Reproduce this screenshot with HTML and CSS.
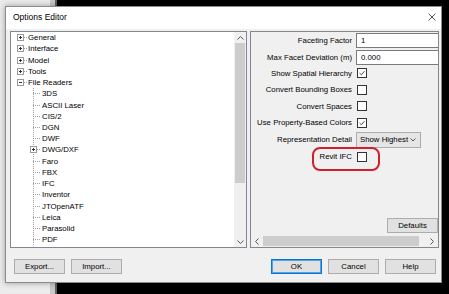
FILE: index.html
```html
<!DOCTYPE html>
<html lang="en">

<head>
  <meta charset="UTF-8">
  <meta name="viewport" content="width=device-width, initial-scale=1.0">
  <title>Options Editor</title>
  <link rel="stylesheet" href="styles.css">
</head>

<body>
  <div class="dialog">
    <header class="titlebar">
      <h1>Options Editor</h1>
      <svg class="close" width="8" height="8" viewBox="0 0 8 8">
        <path d="M0.5 0.5L7.5 7.5M7.5 0.5L0.5 7.5" stroke="#444" stroke-width="0.9" fill="none" />
      </svg>
    </header>

    <div class="split">
      <!-- left: option tree -->
      <div class="tree">
        <ul class="nodes">
          <li><div class="row"><svg class="exp" viewBox="0 0 7 7"><rect x="0.5" y="0.5" width="6" height="6" fill="#fff" stroke="#9a9a9a" /><path d="M2 3.5H5M3.5 2V5" stroke="#333" stroke-width="1" /></svg><i class="dash"></i>General</div></li>
          <li><div class="row"><svg class="exp" viewBox="0 0 7 7"><rect x="0.5" y="0.5" width="6" height="6" fill="#fff" stroke="#9a9a9a" /><path d="M2 3.5H5M3.5 2V5" stroke="#333" stroke-width="1" /></svg><i class="dash"></i>Interface</div></li>
          <li><div class="row"><svg class="exp" viewBox="0 0 7 7"><rect x="0.5" y="0.5" width="6" height="6" fill="#fff" stroke="#9a9a9a" /><path d="M2 3.5H5M3.5 2V5" stroke="#333" stroke-width="1" /></svg><i class="dash"></i>Model</div></li>
          <li><div class="row"><svg class="exp" viewBox="0 0 7 7"><rect x="0.5" y="0.5" width="6" height="6" fill="#fff" stroke="#9a9a9a" /><path d="M2 3.5H5M3.5 2V5" stroke="#333" stroke-width="1" /></svg><i class="dash"></i>Tools</div></li>
          <li>
            <div class="row"><svg class="exp" viewBox="0 0 7 7"><rect x="0.5" y="0.5" width="6" height="6" fill="#fff" stroke="#9a9a9a" /><path d="M2 3.5H5" stroke="#333" stroke-width="1" /></svg><i class="dash"></i>File Readers</div>
            <ul class="kids">
              <li class="row"><i class="stem"></i>3DS</li>
              <li class="row"><i class="stem"></i>ASCII Laser</li>
              <li class="row"><i class="stem"></i>CIS/2</li>
              <li class="row"><i class="stem"></i>DGN</li>
              <li class="row"><i class="stem"></i>DWF</li>
              <li class="row sub"><svg class="exp" viewBox="0 0 7 7"><rect x="0.5" y="0.5" width="6" height="6" fill="#fff" stroke="#9a9a9a" /><path d="M2 3.5H5M3.5 2V5" stroke="#333" stroke-width="1" /></svg><i class="dash"></i>DWG/DXF</li>
              <li class="row"><i class="stem"></i>Faro</li>
              <li class="row"><i class="stem"></i>FBX</li>
              <li class="row"><i class="stem"></i>IFC</li>
              <li class="row"><i class="stem"></i>Inventor</li>
              <li class="row"><i class="stem"></i>JTOpenATF</li>
              <li class="row"><i class="stem"></i>Leica</li>
              <li class="row"><i class="stem"></i>Parasolid</li>
              <li class="row"><i class="stem"></i>PDF</li>
            </ul>
          </li>
        </ul>
        <div class="vscroll">
          <div class="arrow"><svg width="7" height="4" viewBox="0 0 7 4"><path d="M0.5 3.5L3.5 0.5L6.5 3.5" stroke="#555" fill="none" /></svg></div>
          <div class="thumb"></div>
          <div class="track"></div>
          <div class="arrow"><svg width="7" height="4" viewBox="0 0 7 4"><path d="M0.5 0.5L3.5 3.5L6.5 0.5" stroke="#555" fill="none" /></svg></div>
        </div>
      </div>

      <!-- right: properties of the selected reader -->
      <div class="panel">
        <div class="props">
          <span class="label">Faceting Factor</span>
          <input class="field" type="text" value="1">
          <span class="label">Max Facet Deviation (m)</span>
          <input class="field" type="text" value="0.000">
          <span class="label">Show Spatial Hierarchy</span>
          <span class="check"><svg viewBox="0 0 10 10"><path d="M2 5L4.2 7.2L8.2 2.6" stroke="#222" stroke-width="1" fill="none" /></svg></span>
          <span class="label">Convert Bounding Boxes</span>
          <span class="check"></span>
          <span class="label">Convert Spaces</span>
          <span class="check"></span>
          <span class="label">Use Property-Based Colors</span>
          <span class="check"><svg viewBox="0 0 10 10"><path d="M2 5L4.2 7.2L8.2 2.6" stroke="#222" stroke-width="1" fill="none" /></svg></span>
          <span class="label">Representation Detail</span>
          <div class="select"><span>Show Highest</span><svg width="6" height="4" viewBox="0 0 6 4"><path d="M0.5 0.5L3 3L5.5 0.5" stroke="#555" fill="none" /></svg></div>
          <span class="label">Revit IFC</span>
          <span class="check"></span>
        </div>
        <div class="mark"></div>
        <div class="panel-foot">
          <button type="button">Defaults</button>
        </div>
        <div class="hscroll">
          <div class="arrow"><svg width="4" height="7" viewBox="0 0 4 7"><path d="M3.5 0.5L0.5 3.5L3.5 6.5" stroke="#555" fill="none" /></svg></div>
          <div class="hthumb"></div>
          <div class="track"></div>
          <div class="arrow"><svg width="4" height="7" viewBox="0 0 4 7"><path d="M0.5 0.5L3.5 3.5L0.5 6.5" stroke="#555" fill="none" /></svg></div>
        </div>
      </div>
    </div>

    <footer class="buttons">
      <button type="button">Export...</button>
      <button type="button">Import...</button>
      <button type="button" class="ok">OK</button>
      <button type="button">Cancel</button>
      <button type="button">Help</button>
    </footer>
  </div>
</body>

</html>
```

FILE: styles.css
```css
/* Windows 10 dialog greys: face #F0F0F0, button #E1E1E1, edge #ADADAD, focus #0078D7 */
* {
  box-sizing: border-box;
}

body {
  margin: 0;
  height: 294px;
  overflow: hidden;
  padding: 6px 0 0 5px;
  background: linear-gradient(to right, #ececec 0 50px, #c8c8c8 50px 55px, #606060 55px 57px, #000 57px);
  font-family: "Liberation Sans", Arial, sans-serif;
  font-size: 7.8px;
  color: #000;
}

.dialog {
  width: 437px;
  height: 277px;
  border: 1px solid #8c8c8c;
  background: #f0f0f0;
  box-shadow: 0 0 6px rgba(0, 0, 0, 0.35);
  display: flex;
  flex-direction: column;
}

.titlebar {
  height: 22px;
  background: #fff;
  display: flex;
  align-items: center;
  padding: 0 5px 2px 7px;
}

.titlebar h1 {
  flex-grow: 1;
  margin: 0;
  font-size: 8.5px;
  font-weight: normal;
}

.split {
  display: flex;
  gap: 3px;
  height: 217px;
  margin-top: 2px;
  padding: 0 1px 0 4px;
}

/* tree */
.tree {
  width: 237px;
  border: 1px solid #828790;
  background: #fff;
  display: flex;
}

.nodes,
.kids {
  list-style: none;
  margin: 0;
  padding: 0;
}

.nodes {
  flex-grow: 1;
  overflow: hidden;
}

.row {
  display: flex;
  align-items: center;
  height: 11.24px;
  padding-left: 6px;
  white-space: nowrap;
}

.exp {
  width: 7px;
  height: 7px;
  flex-shrink: 0;
}

.dash {
  width: 3px;
  height: 1px;
  margin-right: 1px;
  background: repeating-linear-gradient(to right, #a0a0a0 0 1px, transparent 1px 2px);
}

.kids {
  background: repeating-linear-gradient(to bottom, #a0a0a0 0 1px, transparent 1px 2px) 22px 0 / 1px 100% no-repeat;
}

.kids .row {
  padding-left: 22px;
}

.kids .row.sub {
  padding-left: 19px;
}

.kids .dash {
  margin-right: 2px;
}

.stem {
  width: 7px;
  height: 1px;
  margin-right: 2px;
  background: repeating-linear-gradient(to right, #a0a0a0 0 1px, transparent 1px 2px);
}

.vscroll {
  width: 12px;
  display: flex;
  flex-direction: column;
  background: #f0f0f0;
}

.vscroll .arrow {
  height: 11px;
  display: flex;
  align-items: center;
  justify-content: center;
}

.thumb {
  height: 140px;
  margin: 0 1px;
  background: #cdcdcd;
}

.track {
  flex-grow: 1;
}

/* property panel */
.panel {
  width: 189px;
  border: 1px solid #828790;
  background: #f0f0f0;
  display: flex;
  flex-direction: column;
  overflow: hidden;
  position: relative;
}

.props {
  display: grid;
  grid-template-columns: 101px 90px;
  grid-template-rows: 17px 16px 16px 17px 16px 17px 17px 17px;
  column-gap: 4px;
  align-items: center;
}

.label {
  text-align: right;
  white-space: nowrap;
}

.field {
  width: 90px;
  height: 15px;
  margin: 0;
  padding: 0 0 0 4px;
  border: 1px solid #7a7a7a;
  background: #fff;
  font: inherit;
  color: #000;
}

.check {
  width: 10px;
  height: 10px;
  margin-left: 1px;
  border: 1px solid #333;
  background: #fff;
  display: flex;
}

.check svg {
  width: 8px;
  height: 8px;
}

.select {
  width: 65px;
  height: 16px;
  border: 1px solid #adadad;
  background: #e5e5e5;
  display: flex;
  align-items: center;
  justify-content: space-between;
  padding: 0 4px 0 3px;
}

.mark {
  position: absolute;
  left: 61px;
  top: 115px;
  width: 68px;
  height: 24px;
  border: 2.5px solid #d21f2c;
  border-radius: 8px;
}

.panel-foot {
  margin-top: auto;
  margin-bottom: 2px;
  display: flex;
  justify-content: flex-end;
}

.hscroll {
  height: 12px;
  display: flex;
  background: #f0f0f0;
}

.hscroll .arrow {
  width: 12px;
  display: flex;
  align-items: center;
  justify-content: center;
}

.hthumb {
  width: 156px;
  margin: 1px 0;
  background: #cdcdcd;
}

/* buttons */
button {
  width: 51px;
  height: 15px;
  padding: 0;
  border: 1px solid #adadad;
  background: #e1e1e1;
  font: inherit;
  color: #000;
  line-height: 13px;
}

.buttons {
  display: flex;
  gap: 6px;
  padding: 11px 5px 0 8px;
}

.ok {
  margin-left: auto;
  border-color: #0078d7;
  box-shadow: inset 0 0 0 1px #5aa0e0;
}
```
